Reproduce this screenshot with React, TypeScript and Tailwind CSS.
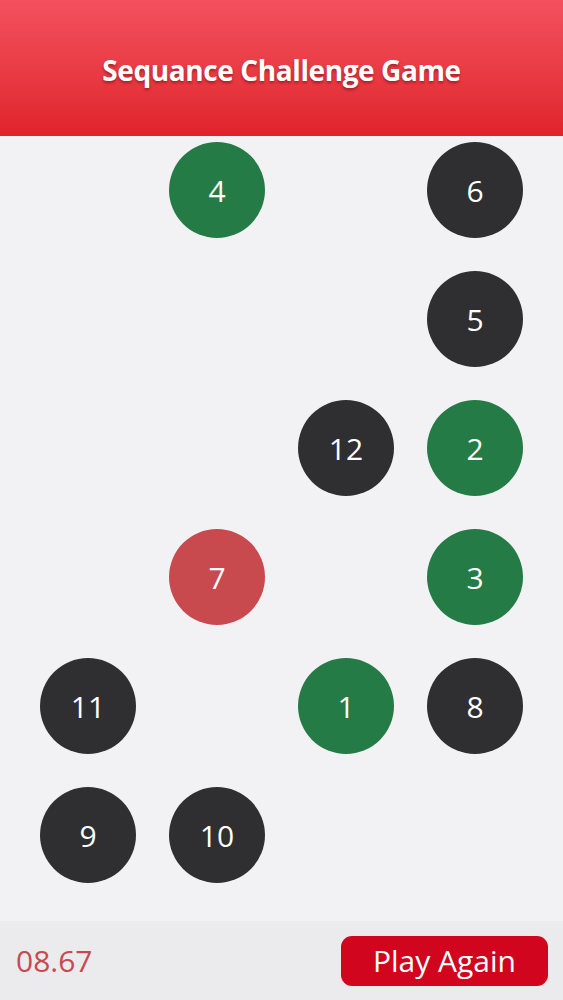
import React from 'react'

type Kind = 'green' | 'dark' | 'red' | null

// 4 columns x 6 rows, null = empty cell
const board: { n?: number; kind: Kind }[] = [
  { kind: null }, { n: 4, kind: 'green' }, { kind: null }, { n: 6, kind: 'dark' },
  { kind: null }, { kind: null }, { kind: null }, { n: 5, kind: 'dark' },
  { kind: null }, { kind: null }, { n: 12, kind: 'dark' }, { n: 2, kind: 'green' },
  { kind: null }, { n: 7, kind: 'red' }, { kind: null }, { n: 3, kind: 'green' },
  { n: 11, kind: 'dark' }, { kind: null }, { n: 1, kind: 'green' }, { n: 8, kind: 'dark' },
  { n: 9, kind: 'dark' }, { n: 10, kind: 'dark' }, { kind: null }, { kind: null },
]

const bg: Record<string, string> = {
  green: 'bg-[#247b45]',
  dark: 'bg-[#2f2f31]',
  red: 'bg-[#c84a4f]',
}

export default function App() {
  return (
    <div className="flex h-[1000px] w-full flex-col bg-[#f2f2f4] font-['Open_Sans',sans-serif]">
      <header className="flex h-[136px] items-center justify-center bg-gradient-to-b from-[#f3505e] to-[#e0222a] pt-[4px]">
        <h1 className="text-[28px] font-bold tracking-[-0.4px] text-white [text-shadow:0_2px_3px_rgba(80,0,0,0.45)]">
          Sequance Challenge Game
        </h1>
      </header>

      <main className="flex-1 px-[40px] pt-[6px]">
        <div className="grid grid-cols-4 gap-[33px]">
          {board.map((c, i) =>
            c.kind ? (
              <div
                key={i}
                className={`flex h-[96px] w-[96px] items-center justify-center rounded-full text-[30px] text-white ${bg[c.kind]}`}
              >
                {c.n}
              </div>
            ) : (
              <div key={i} className="h-[96px] w-[96px]" />
            )
          )}
        </div>
      </main>

      <footer className="flex h-[79px] items-center justify-between bg-[#ebebed] pl-[16px] pr-[15px]">
        <span className="text-[30px] text-[#c8494f]">08.67</span>
        <button className="flex h-[50px] w-[207px] items-center justify-center rounded-[11px] bg-[#d1051d] text-[30px] text-white">
          Play Again
        </button>
      </footer>
    </div>
  )
}
